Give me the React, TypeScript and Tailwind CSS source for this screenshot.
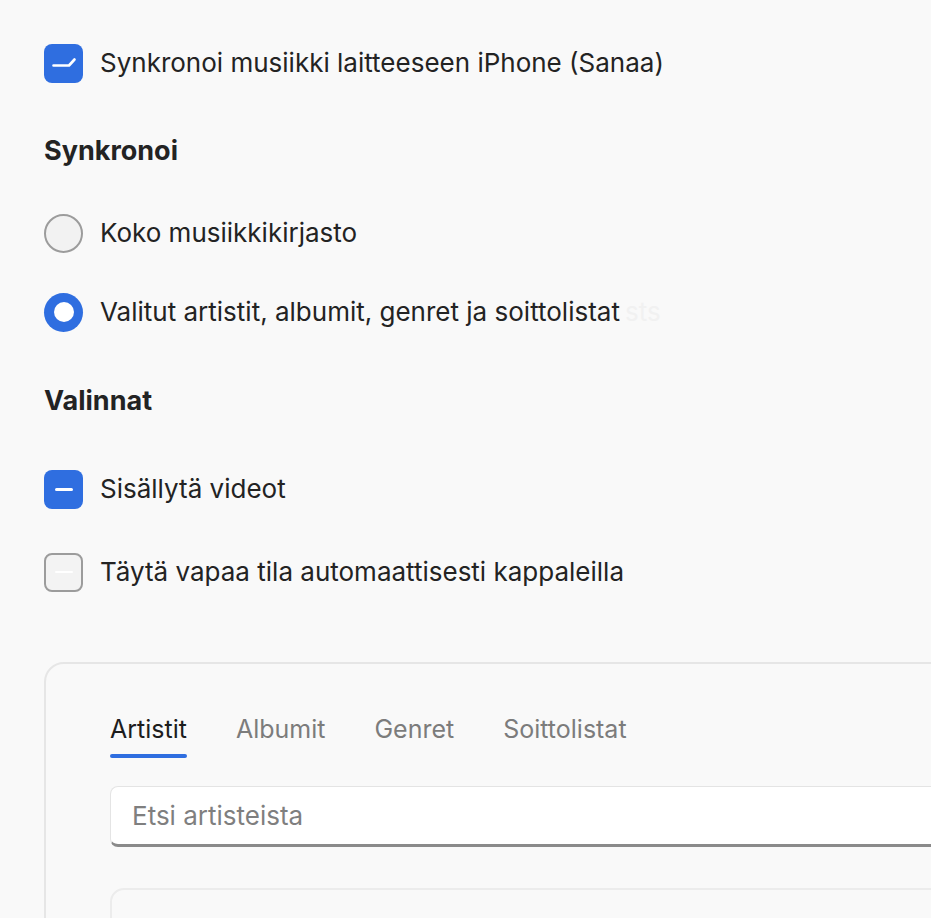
import React from 'react';

const font = { fontFamily: 'Inter, "Noto Sans", "Liberation Sans", sans-serif' };

const CheckedBox: React.FC<{ glyph: 'check' | 'dash' }> = ({ glyph }) => (
  <span className="flex h-[39px] w-[39px] shrink-0 items-center justify-center rounded-[8px] bg-[#2f6ee0]">
    {glyph === 'check' ? (
      <svg width="39" height="39" viewBox="0 0 39 39" fill="none">
        <path d="M9.5 21.5 H25 L30.5 15.5" stroke="white" strokeWidth="2.6" strokeLinecap="round" strokeLinejoin="round" />
      </svg>
    ) : (
      <span className="h-[3px] w-[18px] rounded-full bg-white" />
    )}
  </span>
);

const EmptyBox = () => (
  <span className="flex h-[39px] w-[39px] shrink-0 items-center justify-center rounded-[8px] border-2 border-[#9c9c9c] bg-[#f3f3f3]">
    <span className="h-[2px] w-[18px] rounded-full bg-white" />
  </span>
);

const Radio: React.FC<{ on?: boolean }> = ({ on }) =>
  on ? (
    <span className="flex h-[39px] w-[39px] shrink-0 items-center justify-center rounded-full bg-[#2f6ee0]">
      <span className="h-[20px] w-[20px] rounded-full bg-white" />
    </span>
  ) : (
    <span className="h-[39px] w-[39px] shrink-0 rounded-full border-2 border-[#9c9c9c] bg-[#f2f2f2]" />
  );

const Row: React.FC<{ control: React.ReactNode; children: React.ReactNode; className?: string }> = ({ control, children, className }) => (
  <div className={`flex h-[40px] items-center gap-[17px] ${className ?? ''}`}>
    {control}
    <span className="text-[26px] leading-none text-[#232323]">{children}</span>
  </div>
);

const tabs = ['Artistit', 'Albumit', 'Genret', 'Soittolistat'];

export default function App() {
  return (
    <div className="h-[918px] w-full overflow-hidden bg-[#f9f9f9] pl-[44px] pt-[43px]" style={font}>
      <Row control={<CheckedBox glyph="check" />}>Synkronoi musiikki laitteeseen iPhone (Sanaa)</Row>

      <h2 className="mt-[53px] flex h-[30px] items-center text-[27px] font-bold text-[#232323]">Synkronoi</h2>

      <Row control={<Radio />} className="mt-[47px]">Koko musiikkikirjasto</Row>
      <Row control={<Radio on />} className="mt-[39px]">
        Valitut artistit, albumit, genret ja soittolistat
        <span className="ml-[5px] text-[#f1f1f1]">sts</span>
      </Row>

      <h2 className="mt-[54px] flex h-[30px] items-center text-[27px] font-bold text-[#232323]">Valinnat</h2>

      <Row control={<CheckedBox glyph="dash" />} className="mt-[53px]">Sisällytä videot</Row>
      <Row control={<EmptyBox />} className="mt-[43px]">Täytä vapaa tila automaattisesti kappaleilla</Row>

      <div className="mt-[70px] w-[1000px] rounded-tl-[20px] border-2 border-[#e6e6e6] pl-[64px] pt-[51px]">
        <div className="flex gap-[49px]">
          {tabs.map((t, i) => (
            <div key={t} className="flex flex-col">
              <span className={`flex h-[30px] items-center text-[25px] ${i === 0 ? 'text-[#1d1d1d]' : 'text-[#7c7c7c]'}`}>{t}</span>
              <span className={`mt-[9px] h-[4px] rounded-full ${i === 0 ? 'bg-[#2f6ee0]' : 'bg-transparent'}`} />
            </div>
          ))}
        </div>

        <div className="mt-[28px] flex h-[61px] items-center rounded-[8px] border border-b-[3px] border-[#e4e4e4] border-b-[#8a8a8a] bg-white pl-[21px]">
          <span className="text-[26px] text-[#7f7f7f]">Etsi artisteista</span>
        </div>

        <div className="mt-[41px] h-[200px] rounded-tl-[14px] border-2 border-[#ececec] bg-[#f9f9f9]" />
      </div>
    </div>
  );
}
